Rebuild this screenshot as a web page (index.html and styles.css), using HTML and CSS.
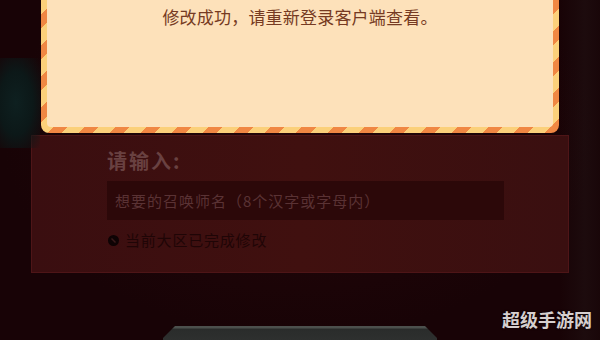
FILE: index.html
```html
<!DOCTYPE html>
<html lang="zh-CN">
<head>
<meta charset="utf-8">
<title>修改成功</title>
<link rel="stylesheet" href="styles.css">
</head>
<body>
<div class="scene">
  <div class="deco-left"></div>
  <div class="modal">
    <div class="modal-inner">
      <p class="modal-text">修改成功，请重新登录客户端查看。</p>
    </div>
  </div>
  <div class="panel">
    <div class="label">请输入:</div>
    <div class="input">想要的召唤师名（8个汉字或字母内）</div>
    <div class="status">
      <span class="dot"><svg width="11" height="11" viewBox="0 0 11 11"><circle cx="5.5" cy="5.5" r="5.5" fill="#0e0304"/><path d="M3.5 3.5 L7.5 7.5" stroke="#3a1a1a" stroke-width="1.4"/></svg></span>
      <span class="status-text">当前大区已完成修改</span>
    </div>
  </div>
  <div class="button"></div>
  <div class="watermark">超级手游网</div>
</div>
</body>
</html>
```
FILE: styles.css
```css
html, body {
  margin: 0;
  padding: 0;
}
body {
  width: 600px;
  height: 340px;
  overflow: hidden;
  background: #1a0406;
  font-family: "Noto Sans CJK SC", "Noto Sans", sans-serif;
}
.scene {
  position: relative;
  width: 600px;
  height: 340px;
  display: flex;
  flex-direction: column;
  align-items: center;
  background:
    linear-gradient(90deg, rgba(0,0,0,0) 0, rgba(0,0,0,0) 560px, rgba(40,30,30,0.3) 585px, rgba(30,20,20,0.2) 600px),
    radial-gradient(ellipse at 50% 40%, #25070a 0, #180306 70%);
}
.deco-left {
  position: absolute;
  left: 0;
  top: 58px;
  width: 40px;
  height: 90px;
  background: radial-gradient(ellipse at 40% 50%, #0e2020 0, #0c1818 50%, rgba(13,18,18,0) 100%);
}
.modal {
  position: relative;
  margin-top: -12px;
  width: 518px;
  height: 145px;
  box-sizing: border-box;
  padding: 6px;
  border-radius: 8px;
  background: repeating-linear-gradient(-45deg, #f08743 0, #f08743 10px, #fbd07a 10px, #fbd07a 22px);
  flex: none;
}
.modal-inner {
  height: 100%;
  border-radius: 4px;
  background: #fde1ba;
  display: flex;
  justify-content: center;
}
.modal-text {
  margin: 11px 0 0;
  font-size: 17px;
  line-height: 24px;
  color: #763a22;
  letter-spacing: 0.2px;
}
.panel {
  margin-top: 2px;
  width: 538px;
  height: 138px;
  box-sizing: border-box;
  border: 1px solid #4e1517;
  background: linear-gradient(90deg, #3a0e10 0, #40100f 50%, #3a0f10 100%);
  padding: 11px 0 0 75px;
  display: flex;
  flex-direction: column;
  flex: none;
}
.label {
  font-size: 20px;
  font-weight: bold;
  line-height: 28px;
  color: #694141;
  letter-spacing: 2px;
}
.input {
  margin-top: 6px;
  width: 397px;
  height: 39px;
  box-sizing: border-box;
  background: #2c0809;
  color: #5a3234;
  font-size: 15px;
  letter-spacing: 1px;
  line-height: 39px;
  padding-left: 8px;
}
.status {
  margin-top: 10px;
  display: flex;
  align-items: center;
  gap: 6px;
  padding-left: 1px;
}
.dot {
  display: flex;
  width: 11px;
  height: 11px;
}
.status-text {
  font-size: 15px;
  line-height: 20px;
  letter-spacing: 0.8px;
  color: #1f0506;
}
.button {
  margin-top: 53px;
  width: 274px;
  height: 30px;
  flex: none;
  box-sizing: border-box;
  background: linear-gradient(180deg, #4c504d 0, #4c504d 2px, #2a2c2b 3px, #333534 100%);
  clip-path: polygon(12px 0, calc(100% - 12px) 0, 100% 12px, 100% 100%, 0 100%, 0 12px);
}
.watermark {
  position: absolute;
  right: 8px;
  bottom: 9px;
  font-size: 18px;
  font-weight: bold;
  line-height: 24px;
  color: #d6cfcf;
  letter-spacing: 0;
  text-shadow: 0 0 2px rgba(0,0,0,0.6);
}
```
